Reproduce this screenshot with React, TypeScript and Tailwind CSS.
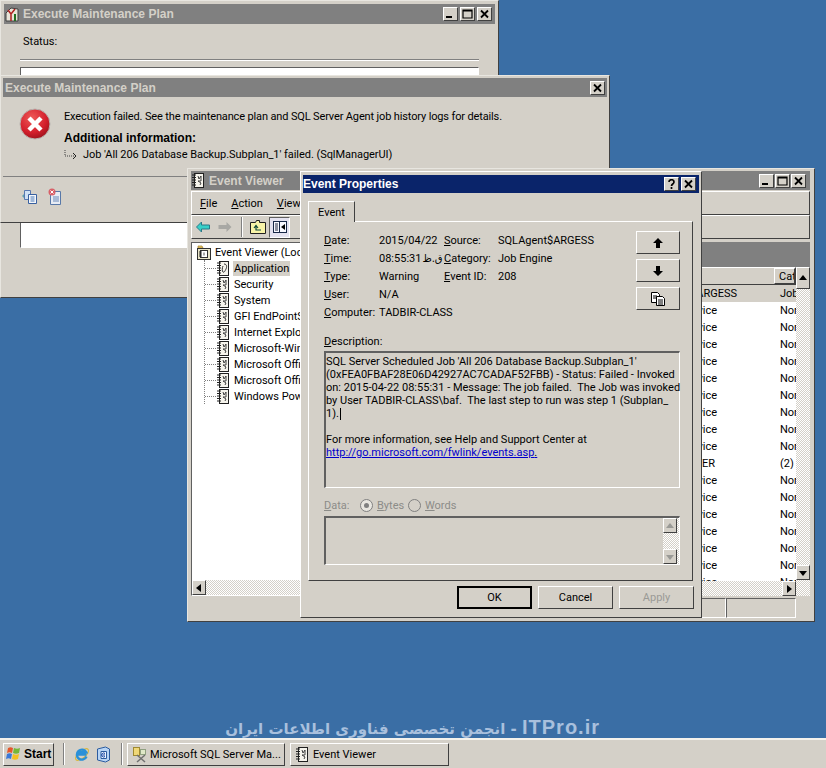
import React from 'react';

const raised = 'border border-t-white border-l-white border-r-[#404040] border-b-[#404040]';
const sunken = 'border border-t-[#606060] border-l-[#606060] border-r-white border-b-white';
const dither = 'bg-[repeating-conic-gradient(#ffffff_0_25%,#d4d0c8_0_50%)] bg-[length:2px_2px]';
const windowFrame = 'absolute flex flex-col bg-[#d4d0c8] border border-t-[#e8e6e0] border-l-[#e8e6e0] border-r-[#404040] border-b-[#404040]';
const boldText = "text-[12px] font-bold [font-family:'Liberation_Sans',sans-serif]";

function CaptionButton({ kind }: { kind: 'min' | 'max' | 'close' | 'help' }) {
  return (
    <div className={`w-[15px] h-[14px] flex items-center justify-center bg-[#d4d0c8] ${raised}`}>
      <svg width="11" height="10" viewBox="0 0 11 10">
        {kind === 'min' && <rect x="1" y="7" width="6" height="2" fill="#000" />}
        {kind === 'max' && <path d="M1 1h9v8H1zM1 2h9" fill="none" stroke="#000" strokeWidth="1.2" />}
        {kind === 'close' && <path d="M2 1.5l7 7M9 1.5l-7 7" stroke="#000" strokeWidth="1.8" />}
        {kind === 'help' && (
          <path d="M3 3c0-3 5-3 5 0 0 2-2.500 2-2.500 4M5.500 8v2" fill="none" stroke="#000" strokeWidth="1.700" />
        )}
      </svg>
    </div>
  );
}

function LogIcon({ open }: { open?: boolean }) {
  return (
    <svg width="14" height="15" viewBox="0 0 14 15" className="shrink-0">
      <rect x="3.500" y="0.500" width="9" height="14" fill="#f6f4ec" stroke="#202020" />
      <path d="M1 2h4M1 4.500h4M1 7h4M1 9.500h4M1 12h4" stroke="#202020" />
      {open ? (
        <path d="M8 3c3 0 3 3 2 5s-2 4-3 3-1-4 0-6" fill="none" stroke="#303030" />
      ) : (
        <path d="M7 3l1 3 2-3v5l-3 0 3 2-1 2" fill="none" stroke="#404040" />
      )}
    </svg>
  );
}

function RootIcon() {
  return (
    <svg width="16" height="17" viewBox="0 0 16 17" className="shrink-0">
      <path d="M2 2h4l1 2H2z" fill="#e8c860" stroke="#a08030" strokeWidth="0.700" />
      <rect x="1.500" y="4.500" width="13" height="11" fill="#e8e4c8" stroke="#303030" />
      <rect x="4.500" y="6.500" width="7" height="7" fill="#fff" stroke="#303030" />
      <path d="M3 8h3M3 10h3M3 12h3" stroke="#202020" />
      <path d="M8 8.500v3" stroke="#505050" />
    </svg>
  );
}

function ErrorIcon() {
  return (
    <svg width="32" height="32" viewBox="0 0 32 32" className="shrink-0">
      <defs>
        <radialGradient id="err" cx="0.4" cy="0.3" r="0.8">
          <stop offset="0" stopColor="#ee5a58" />
          <stop offset="0.6" stopColor="#d41f2c" />
          <stop offset="1" stopColor="#8e1018" />
        </radialGradient>
      </defs>
      <circle cx="16" cy="16" r="15" fill="url(#err)" stroke="#b8b4b0" />
      <path d="M10 10l12 12M22 10L10 22" stroke="#fff" strokeWidth="4.500" />
    </svg>
  );
}

function CopyIcon() {
  return (
    <svg width="16" height="16" viewBox="0 0 16 16">
      <path d="M1.500 1.500h6l2 2v8h-8z" fill="#fff" stroke="#000" />
      <path d="M6.500 5.500h6l2 2v7h-8z" fill="#fff" stroke="#000" />
      <path d="M3 5h4M3 7h3M8 9h5M8 11h5M8 13h5" stroke="#000" />
    </svg>
  );
}

function DialogButton({ label, isDefault, disabled }: { label: string; isDefault?: boolean; disabled?: boolean }) {
  return (
    <div
      className={`w-[75px] h-[23px] flex items-center justify-center bg-[#d4d0c8] ${
        isDefault ? 'border-2 border-black' : raised
      } ${disabled ? 'text-[#9a9a96]' : 'text-black'}`}
    >
      {label}
    </div>
  );
}

function ArrowButton({ children }: { children: React.ReactNode }) {
  return <div className={`w-[44px] h-[23px] flex items-center justify-center bg-[#d4d0c8] ${raised}`}>{children}</div>;
}

function Tri({ dir, color = '#000000' }: { dir: 'up' | 'down' | 'left' | 'right'; color?: string }) {
  const points = {
    up: '4,1 8,6 0,6',
    down: '0,2 8,2 4,7',
    left: '6,0 6,8 1,4',
    right: '2,0 2,8 7,4',
  }[dir];
  return (
    <svg width="8" height="8" viewBox="0 0 8 8">
      <polygon points={points} fill={color} />
    </svg>
  );
}

function ScrollButton({ dir, muted }: { dir: 'up' | 'down' | 'left' | 'right'; muted?: boolean }) {
  return (
    <div className={`w-[14px] h-[15px] shrink-0 flex items-center justify-center bg-[#d4d0c8] ${raised}`}>
      <Tri dir={dir} color={muted ? '#9a9a96' : '#000000'} />
    </div>
  );
}

function BackgroundWindow() {
  return (
    <div className={`${windowFrame} left-0 top-0 w-[499px] h-[298px] p-[3px]`}>
      <div className="h-[20px] shrink-0 flex items-center gap-[3px] bg-[#808080] pr-[3px]">
        <svg width="16" height="16" viewBox="0 0 16 16" className="shrink-0">
          <path d="M2 15V7l5-5 7 1v12z" fill="#e8e4d8" stroke="#404040" />
          <path d="M4 4l3 4 4-5M7 8v7" fill="none" stroke="#b02020" strokeWidth="1.500" />
          <path d="M11 8v7" stroke="#207020" strokeWidth="2" />
        </svg>
        <span className={`flex-1 text-[#d4d0c8] ${boldText}`}>Execute Maintenance Plan</span>
        <div className="flex gap-[2px]">
          <CaptionButton kind="min" />
          <CaptionButton kind="max" />
          <CaptionButton kind="close" />
        </div>
      </div>
      <div className="pt-[12px] pl-[19px]">Status:</div>
      <div className="mt-[12px] mx-[16px] border-t border-t-[#808080] border-b border-b-white" />
      <div className={`mt-[6px] mx-[16px] h-[181px] bg-white ${sunken}`} />
    </div>
  );
}

function ErrorWindow() {
  return (
    <div className={`${windowFrame} left-0 top-[75px] w-[610px] h-[148px] p-[2px]`}>
      <div className="h-[19px] shrink-0 flex items-center justify-between bg-[#808080] pl-[2px] pr-[2px]">
        <span className={`text-[#d4d0c8] ${boldText}`}>Execute Maintenance Plan</span>
        <CaptionButton kind="close" />
      </div>
      <div className="flex gap-[13px] pl-[16px] pt-[11px] h-[80px] border-b border-b-[#808080]">
        <ErrorIcon />
        <div className="flex flex-col">
          <div className="h-[18px] leading-[18px] tracking-[-0.14px]">
            Execution failed. See the maintenance plan and SQL Server Agent job history logs for details.
          </div>
          <div className={`h-[18px] leading-[18px] mt-[3px] ${boldText}`}>Additional information:</div>
          <div className="h-[16px] leading-[16px] flex items-center gap-[6px]">
            <svg width="13" height="10" viewBox="0 0 13 10">
              <path d="M1 0v6h9" fill="none" stroke="#404040" strokeDasharray="1 1" />
              <path d="M9 3l3 3-3 3" fill="none" stroke="#202020" />
            </svg>
            <span className="tracking-[-0.05px]">Job 'All 206 Database Backup.Subplan_1' failed. (SqlManagerUI)</span>
          </div>
        </div>
      </div>
      <div className="flex gap-[8px] pl-[18px] pt-[11px]">
        <svg width="18" height="18" viewBox="0 0 18 18">
          <path d="M3.500 2.500h6v9h-6z" fill="#cfe0f4" stroke="#5878b0" />
          <path d="M7.500 6.500h8v9h-8z" fill="#f4f6fa" stroke="#3860a0" />
          <path d="M9.500 9h4M9.500 11h4M9.500 13h4" stroke="#4878b8" />
          <path d="M1 8l2-2v4z" fill="#60a0b0" />
        </svg>
        <svg width="16" height="18" viewBox="0 0 16 18">
          <path d="M3.500 3.500h10v13h-10z" fill="#e8ecf4" stroke="#5878a8" />
          <path d="M6 9h6M6 11h6M6 13h6" stroke="#6888b8" />
          <circle cx="5" cy="4" r="3.500" fill="#d86068" />
          <path d="M3.500 2.500l3 3M6.500 2.500l-3 3" stroke="#fff" />
        </svg>
      </div>
    </div>
  );
}

const logNames = [
  'Application',
  'Security',
  'System',
  'GFI EndPointSecurity',
  'Internet Explorer',
  'Microsoft-Windows',
  'Microsoft Office Diag',
  'Microsoft Office Sess',
  'Windows PowerShell',
];

const eventRows = [
  { source: 'SQLAgent$ARGESS', cat: 'Job', pad: 'pr-[38px]', selected: true },
  ...Array.from({ length: 9 }, () => ({ source: 'Service', cat: 'Nor', pad: 'pr-[58px]', selected: false })),
  { source: 'MSSQLSERVER', cat: '(2)', pad: 'pr-[60px]', selected: false },
  ...Array.from({ length: 7 }, () => ({ source: 'Service', cat: 'Nor', pad: 'pr-[58px]', selected: false })),
];

function ToolbarIcons() {
  return (
    <div className="flex items-center pl-[4px]">
      <svg width="14" height="12" viewBox="0 0 14 12">
        <path d="M0.500 6l5-5v3h8v4h-8v3z" fill="#38d0c8" stroke="#2a7888" />
      </svg>
      <svg width="14" height="12" viewBox="0 0 14 12" className="ml-[8px]">
        <path d="M13.500 6l-5-5v3h-8v4h8v3z" fill="#a8a8a4" />
      </svg>
      <div className="w-[2px] h-[20px] bg-[#808080] border-r border-r-white ml-[9px]" />
      <svg width="16" height="14" viewBox="0 0 16 14" className="ml-[7px]">
        <path d="M0.500 2.500h5l1-2h3v2h6v11h-15z" fill="#f8f4a8" stroke="#202020" />
        <path d="M11 10H6V6M4 8l2-2.500L8 8" fill="none" stroke="#104838" strokeWidth="1.200" />
      </svg>
      <div className={`w-[21px] h-[21px] flex items-center justify-center ml-[3px] ${sunken} bg-[#e4e2f0]`}>
        <svg width="14" height="12" viewBox="0 0 14 12">
          <rect x="0.500" y="0.500" width="13" height="11" fill="#f8f8ff" stroke="#182848" />
          <rect x="6" y="1" width="1" height="10" fill="#182848" />
          <path d="M2 3h3M2 5h3M2 7h3M2 9h3" stroke="#202840" />
          <polygon points="12,3 12,9 8,6" fill="#000" />
        </svg>
      </div>
    </div>
  );
}

function EventViewerWindow() {
  return (
    <div className={`${windowFrame} left-[187px] top-[168px] w-[628px] h-[454px] pl-[3px] pr-[4px] pt-[2px] pb-[3px]`}>
      <div className="h-[19px] shrink-0 flex items-center gap-[4px] bg-[#808080] pr-[4px]">
        <LogIcon />
        <span className={`flex-1 text-[#d4d0c8] ${boldText}`}>Event Viewer</span>
        <div className="flex gap-[1px]">
          <CaptionButton kind="min" />
          <CaptionButton kind="max" />
          <CaptionButton kind="close" />
        </div>
      </div>
      <div className={`h-[24px] mt-[1px] shrink-0 flex items-center gap-[14px] pl-[8px] ${raised}`}>
        <span>
          <span className="underline">F</span>ile
        </span>
        <span>
          <span className="underline">A</span>ction
        </span>
        <span>
          <span className="underline">V</span>iew
        </span>
      </div>
      <div className={`h-[24px] shrink-0 flex items-center ${raised}`}>
        <ToolbarIcons />
      </div>
      <div className="flex-1 min-h-0 flex gap-[3px] mt-[3px]">
        {/* tree */}
        <div className={`w-[240px] shrink-0 flex flex-col bg-white ${sunken}`}>
          <div className="flex-1 pl-[4px] pt-[1px]">
            <div className="h-[16px] flex items-center gap-[3px]">
              <RootIcon />
              <span>Event Viewer (Local)</span>
            </div>
            <div className="ml-[8px] border-l border-dotted border-l-[#808080]">
              {logNames.map((name, i) => (
                <div key={name} className="h-[16px] flex items-center">
                  <div className="w-[11px] border-t border-dotted border-t-[#808080]" />
                  <LogIcon open={i === 0} />
                  <span className={`ml-[3px] px-[1px] h-[15px] leading-[15px] whitespace-nowrap ${i === 0 ? 'bg-[#d4d0c8]' : ''}`}>{name}</span>
                </div>
              ))}
            </div>
          </div>
          <div className={`h-[15px] flex ${dither}`}>
            <ScrollButton dir="left" />
          </div>
        </div>
        {/* list */}
        <div className="flex-1 min-w-0 flex flex-col">
          <div className="h-[25px] shrink-0 bg-[#808080]" />
          <div className="flex-1 min-h-0 flex bg-white">
            <div className="flex-1 min-w-0 flex flex-col">
              <div className="flex-1 min-h-0 overflow-hidden">
                <div className={`h-[18px] flex bg-[#d4d0c8] ${raised}`}>
                  <div className="flex-1" />
                  <div className={`w-[21px] overflow-hidden pl-[4px] leading-[16px] ${raised}`}>Category</div>
                </div>
                {eventRows.map((row, i) => (
                  <div key={i} className={`h-[17px] flex items-center ${row.selected ? 'bg-[#d4d0c8]' : ''}`}>
                    <div className={`flex-1 text-right ${row.pad}`}>{row.source}</div>
                    <div className="w-[21px] overflow-hidden pl-[5px] whitespace-nowrap">{row.cat}</div>
                  </div>
                ))}
              </div>
              <div className={`h-[15px] flex justify-end shrink-0 ${dither}`}>
                <ScrollButton dir="right" />
              </div>
            </div>
            <div className={`w-[14px] shrink-0 flex flex-col justify-between pb-[16px] ${dither}`}>
              <div className={`w-[14px] h-[22px] flex items-center justify-center bg-[#d4d0c8] ${raised}`}>
                <Tri dir="up" />
              </div>
              <ScrollButton dir="down" />
            </div>
          </div>
        </div>
      </div>
      <div className="h-[20px] shrink-0 flex justify-end pr-[14px] mt-[2px]">
        <div className={`w-[26px] ${sunken}`} />
        <div className={`w-[70px] ${sunken}`} />
      </div>
    </div>
  );
}

const fieldRows = [
  ['D', 'ate:', '2015/04/22', 'S', 'ource:', 'SQLAgent$ARGESS'],
  ['T', 'ime:', '08:55:31', 'C', 'ategory:', 'Job Engine'],
  ['T', 'ype:', 'Warning', 'E', 'vent ID:', '208'],
  ['U', 'ser:', 'N/A', '', '', ''],
  ['C', 'omputer:', 'TADBIR-CLASS', '', '', ''],
];

const descriptionLines = [
  "SQL Server Scheduled Job 'All 206 Database Backup.Subplan_1'",
  '(0xFEA0FBAF28E06D42927AC7CADAF52FBB) - Status: Failed - Invoked',
  'on: 2015-04-22 08:55:31 - Message: The job failed.  The Job was invoked',
  'by User TADBIR-CLASS\\baf.  The last step to run was step 1 (Subplan_',
  '1).',
  '',
  'For more information, see Help and Support Center at',
];

function EventPropertiesDialog() {
  return (
    <div className="absolute left-[300px] top-[171px] w-[402px] h-[447px] flex flex-col bg-[#d4d0c8] p-[2px] border border-t-white border-l-white border-r-[#404040] border-b-[#404040]">
      <div className="h-[18px] mt-[1px] shrink-0 flex items-center justify-between bg-[#0a246a] pr-[3px]">
        <span className={`text-white ${boldText}`}>Event Properties</span>
        <div className="flex gap-[2px]">
          <CaptionButton kind="help" />
          <CaptionButton kind="close" />
        </div>
      </div>
      <div className="pl-[5px] pr-[6px] mt-[8px] flex-1 flex flex-col min-h-0">
        <div className="h-[21px] w-[47px] -mb-[1px] z-10 bg-[#d4d0c8] flex items-center justify-center border border-b-0 border-t-white border-l-white border-r-[#404040]">
          Event
        </div>
        <div className={`h-[360px] shrink-0 pl-[15px] pr-[12px] pt-[8px] ${raised}`}>
          <div className="flex justify-between">
            <div className="grid grid-cols-[55px_65px_54px_auto] auto-rows-[18px] items-center pt-[1px] whitespace-nowrap">
              {fieldRows.map((r, i) => (
                <React.Fragment key={i}>
                  <span>
                    <span className="underline">{r[0]}</span>
                    {r[1]}
                  </span>
                  <span>
                    {r[2]}
                    {i === 1 && (
                      <span className="ml-[1px] text-[10px] [font-family:'DejaVu_Sans',sans-serif]">ق.ظ</span>
                    )}
                  </span>
                  <span>
                    <span className="underline">{r[3]}</span>
                    {r[4]}
                  </span>
                  <span>{r[5]}</span>
                </React.Fragment>
              ))}
            </div>
            <div className="flex flex-col gap-[5px] pt-[1px]">
              <ArrowButton>
                <svg width="12" height="12" viewBox="0 0 12 12">
                  <path d="M6 1l5 5H8v5H4V6H1z" fill="#000" />
                </svg>
              </ArrowButton>
              <ArrowButton>
                <svg width="12" height="12" viewBox="0 0 12 12">
                  <path d="M6 11l5-5H8V1H4v5H1z" fill="#000" />
                </svg>
              </ArrowButton>
              <ArrowButton>
                <CopyIcon />
              </ArrowButton>
            </div>
          </div>
          <div className="mt-[13px] h-[16px] leading-[16px]">
            <span className="underline">D</span>escription:
          </div>
          <div className={`mt-[1px] h-[137px] pt-[2px] leading-[13px] whitespace-pre ${sunken} border-t-2 border-l-2`}>
            {descriptionLines.map((line, i) => (
              <div key={i} className="h-[13px] flex items-center">
                {line}
                {i === 4 && <div className="w-px h-[12px] bg-black ml-[1px]" />}
              </div>
            ))}
            <div className="h-[13px] text-[#0000cc] underline">
              http://go.microsoft.com/fwlink/events.asp<span className="text-black no-underline">.</span>
            </div>
          </div>
          <div className="mt-[8px] h-[18px] flex items-center text-[#8c8c88]">
            <span className="w-[36px]">
              <span className="underline">D</span>ata:
            </span>
            <div className="w-[13px] h-[13px] rounded-full bg-[#e8e6e0] border border-[#808080] flex items-center justify-center mr-[4px]">
              <div className="w-[5px] h-[5px] rounded-full bg-[#808080]" />
            </div>
            <span className="w-[31px]">
              <span className="underline">B</span>ytes
            </span>
            <div className="w-[13px] h-[13px] rounded-full border border-[#808080] mr-[4px]" />
            <span>
              <span className="underline">W</span>ords
            </span>
          </div>
          <div className={`mt-[2px] h-[49px] flex justify-end ${sunken} border-t-2 border-l-2`}>
            <div className={`w-[16px] flex flex-col justify-between ${dither}`}>
              <ScrollButton dir="up" muted />
              <ScrollButton dir="down" muted />
            </div>
          </div>
        </div>
        <div className="flex justify-end gap-[6px] mt-[5px] mr-[-1px]">
          <DialogButton label="OK" isDefault />
          <DialogButton label="Cancel" />
          <DialogButton label="Apply" disabled />
        </div>
      </div>
    </div>
  );
}

function Taskbar() {
  return (
    <div className="h-[30px] shrink-0 flex items-center gap-[2px] bg-[#d4d0c8] border-t-2 border-t-[#f4f2ec] pl-[3px]">
      <div className={`w-[51px] h-[23px] flex items-center gap-[2px] pl-[1px] ${boldText} ${raised}`}>
        <svg width="17" height="16" viewBox="0 0 17 16" className="shrink-0">
          <path d="M3 2c2-1 3-1 5 0L7 7C5 6 4 6 2 7z" fill="#e4572c" />
          <path d="M9 2c2 1 4 1 6 0l-1 5c-2 1-4 1-6 0z" fill="#74b838" />
          <path d="M2 8c2-1 3-1 5 0l-1 5c-2-1-3-1-5 0z" fill="#3a78d8" />
          <path d="M8 8c2 1 4 1 6 0l-1 5c-2 1-4 1-6 0z" fill="#f4c020" />
        </svg>
        <span>Start</span>
      </div>
      <div className="w-[2px] h-[22px] bg-[#808080] border-r border-r-white ml-[7px]" />
      <div className="flex items-center gap-[5px] ml-[7px]">
        <svg width="16" height="17" viewBox="0 0 16 17">
          <ellipse cx="8" cy="8.500" rx="8" ry="3.500" fill="none" stroke="#d8b840" strokeWidth="1.200" transform="rotate(-40 8 8.500)" />
          <path d="M12.500 10.500a5 5 0 1 1-.2-4.200H4M4 8.500h8.500" fill="none" stroke="#2a90d8" strokeWidth="2.400" />
        </svg>
        <svg width="17" height="17" viewBox="0 0 17 17">
          <path d="M2.500 3l8-2 4 2v11l-4 2-8-2z" fill="#b8d4f4" stroke="#2c5ca0" />
          <path d="M6 5.500h5.500v7H6z" fill="#f0f6ff" stroke="#2c5ca0" />
          <path d="M10 7.500a2 2 0 1 0 0 3M7.500 9h2.500" fill="none" stroke="#1040a0" />
        </svg>
      </div>
      <div className="w-[2px] h-[22px] bg-[#808080] border-r border-r-white ml-[7px] mr-[2px]" />
      <div className={`w-[158px] h-[23px] flex items-center gap-[2px] pl-[4px] whitespace-nowrap overflow-hidden ${raised}`}>
        <svg width="16" height="17" viewBox="0 0 16 17" className="shrink-0">
          <rect x="1.500" y="1.500" width="6" height="8" fill="#f0d878" stroke="#a08a30" />
          <rect x="8.500" y="3.500" width="5" height="5" fill="#dfe8c8" stroke="#90a080" />
          <path d="M5 9l8 7M13 9l-8 7" stroke="#707070" strokeWidth="1.500" />
        </svg>
        <span>Microsoft SQL Server Ma...</span>
      </div>
      <div className={`w-[159px] h-[23px] ml-[3px] flex items-center gap-[4px] pl-[4px] ${raised}`}>
        <LogIcon />
        <span>Event Viewer</span>
      </div>
    </div>
  );
}

export default function App() {
  return (
    <div className="w-[826px] h-[768px] overflow-hidden flex flex-col bg-[#3a6ea5] text-black text-[11px] leading-none [font-family:Roboto,'DejaVu_Sans',sans-serif]">
      <div className="relative flex-1 min-h-0 flex justify-end items-end pr-[226px] pb-[1px]">
        <BackgroundWindow />
        <ErrorWindow />
        <EventViewerWindow />
        <EventPropertiesDialog />
        <div dir="rtl" className="h-[20px] leading-[20px] whitespace-nowrap font-bold text-[18px] text-[#a9c0dd] [font-family:'Liberation_Sans',sans-serif]">
          <span className="tracking-[1px] text-[20px]">ITPro.ir</span>
          <span className="text-[15px] [font-family:'DejaVu_Sans',sans-serif]"> - انجمن تخصصی فناوری اطلاعات ایران</span>
        </div>
      </div>
      <Taskbar />
    </div>
  );
}
